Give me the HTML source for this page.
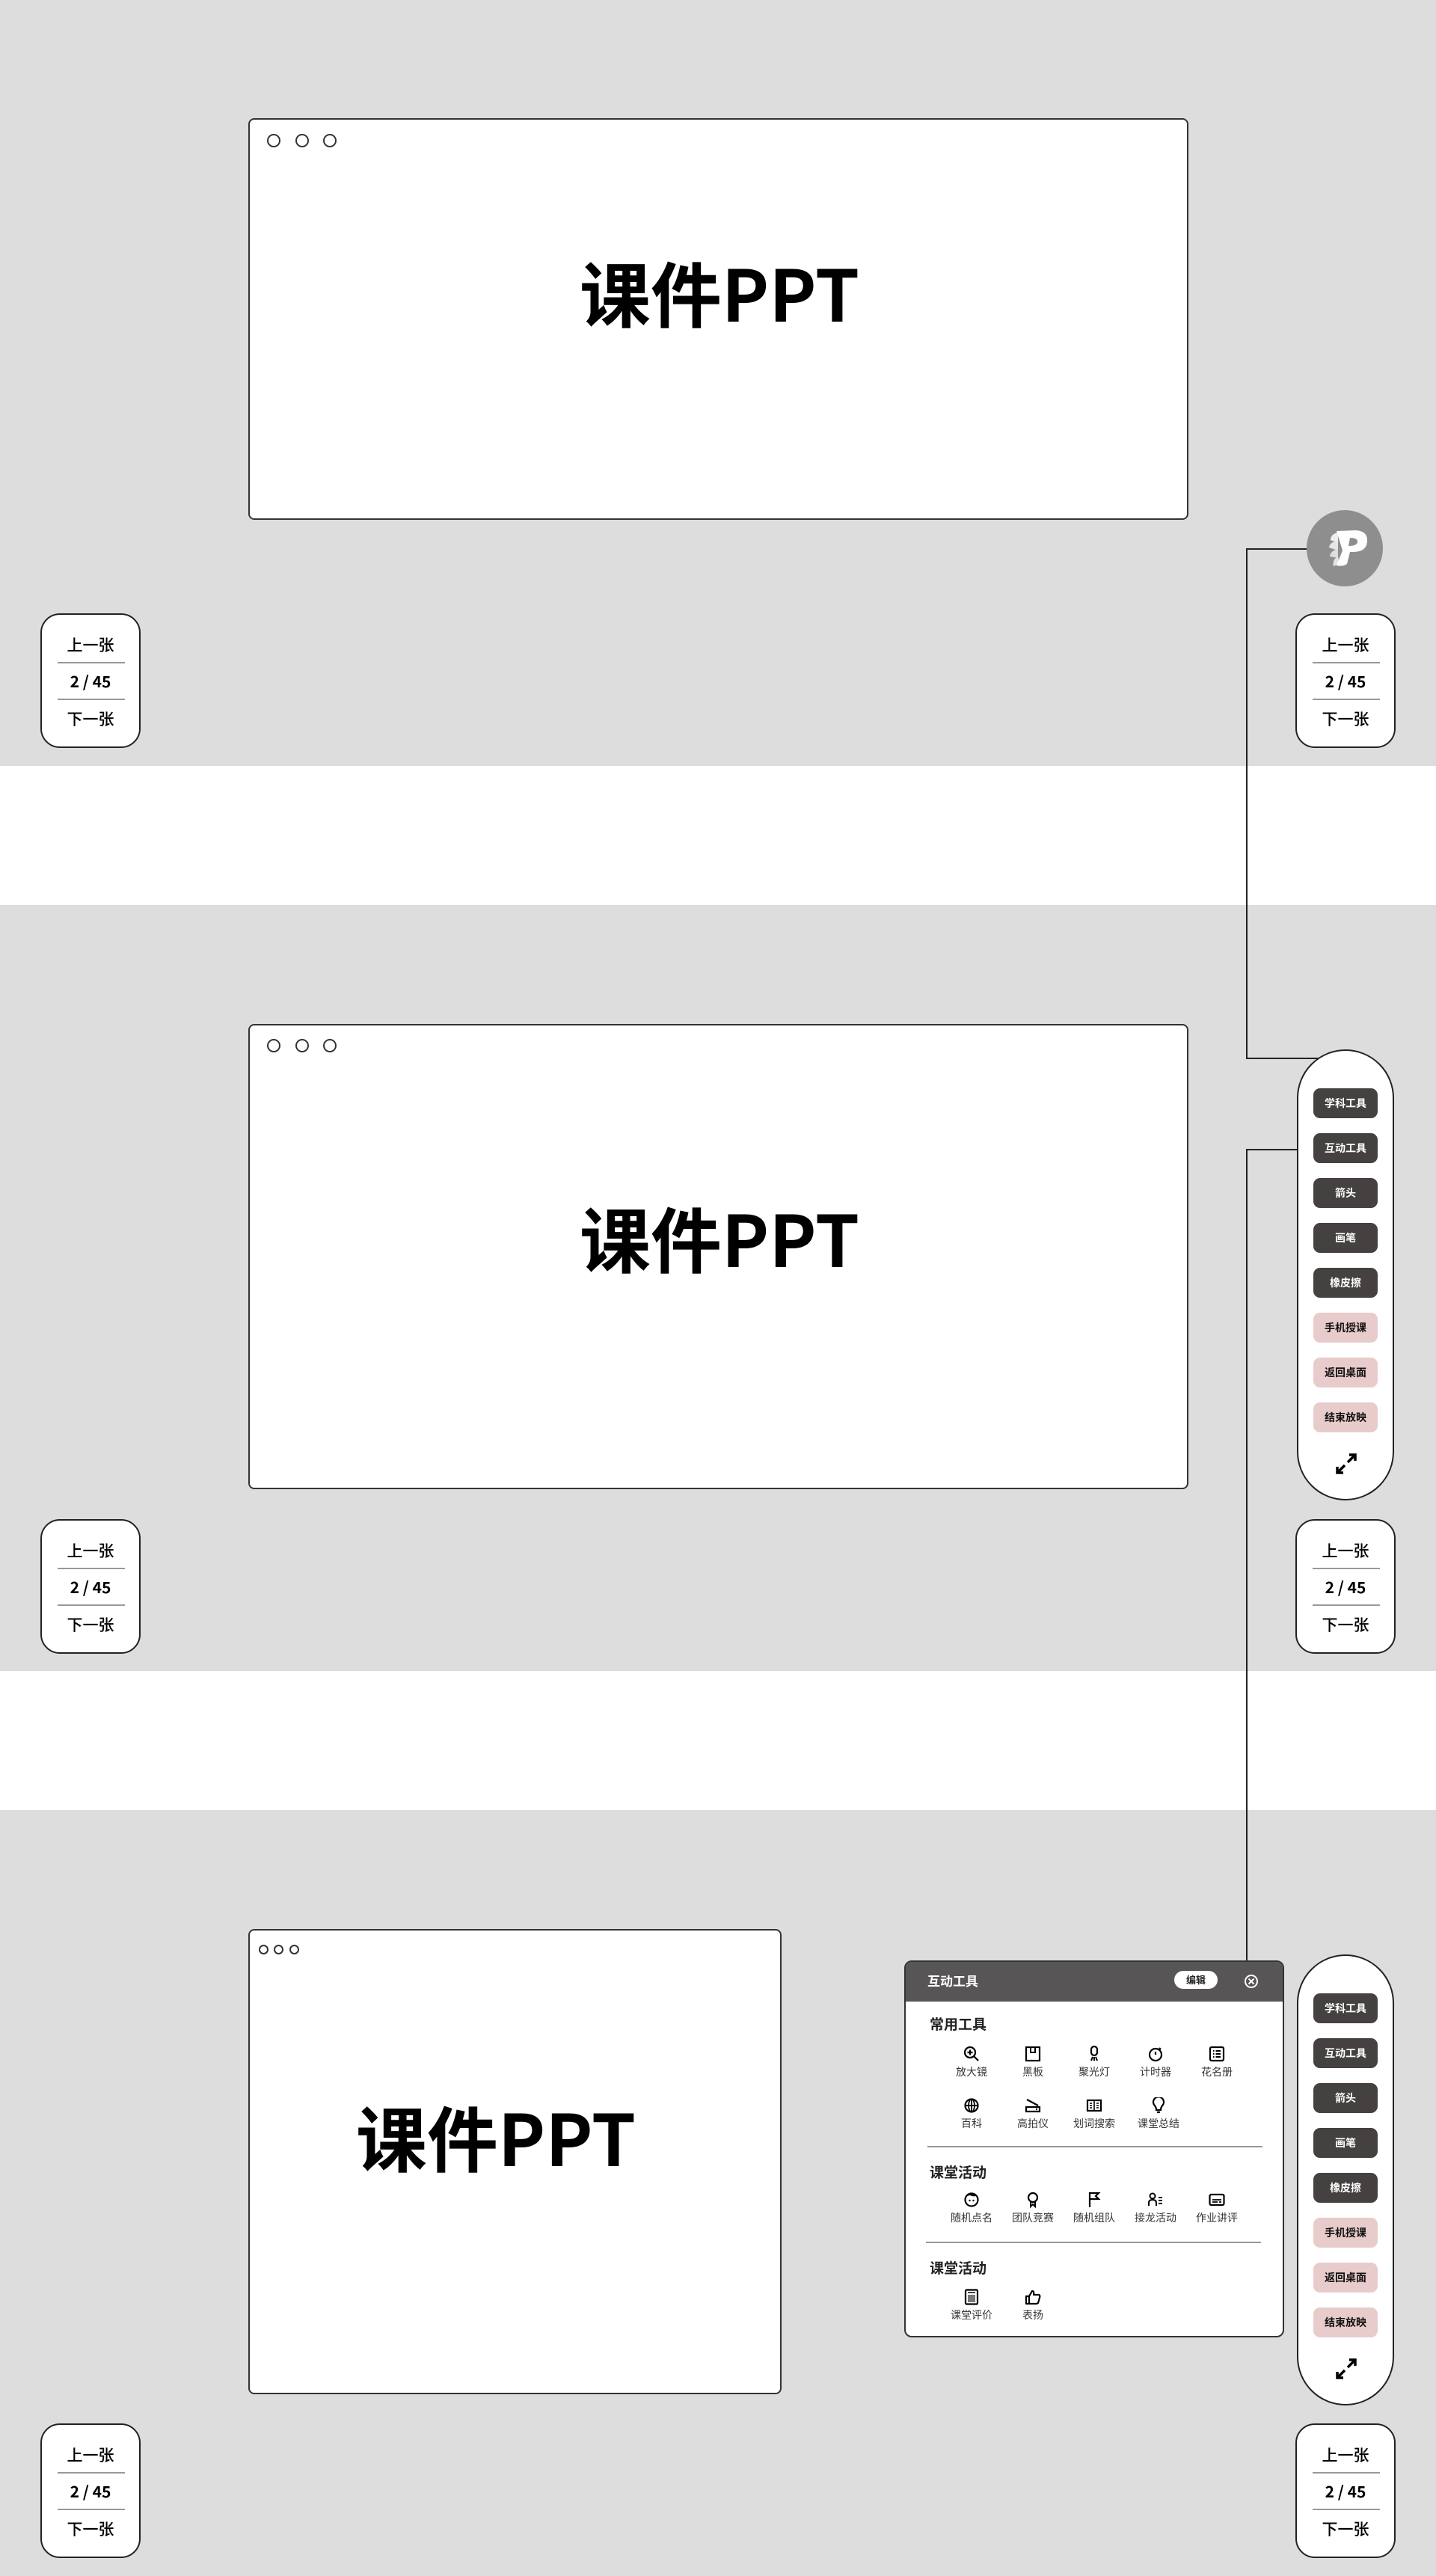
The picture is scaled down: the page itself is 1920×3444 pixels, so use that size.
<!DOCTYPE html>
<html><head><meta charset="utf-8">
<style>
*{margin:0;padding:0;box-sizing:border-box}
body{width:1920px;height:3444px;position:relative;background:#fff;font-family:"Liberation Sans","Noto Sans CJK SC",sans-serif;overflow:hidden}
.sec{position:absolute;left:0;width:1920px;height:1024px;background:#dddddd}
.slide{position:absolute;background:#fff;border:2px solid #333;border-radius:8px}
.dot{position:absolute;border:2px solid #333;border-radius:50%;background:#fff}
.title{position:absolute;font-family:"Noto Sans CJK SC",sans-serif;font-weight:700;font-size:95px;line-height:100px;color:#000;white-space:nowrap;transform:translateX(-50%)}
.nav{position:absolute;width:134px;height:180px;background:#fff;border:2px solid #222;border-radius:26px;font-family:"Noto Sans CJK SC",sans-serif;font-weight:500;color:#000;font-size:21px;text-align:center}
.nav div{position:absolute;left:0;width:130px;line-height:30px}
.nav div.n{font-weight:700;font-family:"Noto Sans CJK SC",sans-serif}
.nav hr{position:absolute;left:21px;width:90px;border:0;border-top:2px solid #999}
.pill{position:absolute;left:1734px;width:130px;height:603px;background:#fff;border:2px solid #222;border-radius:65px}
.btn{position:absolute;left:20px;width:86px;height:40px;border-radius:9px;font-family:"Noto Sans CJK SC",sans-serif;font-weight:700;font-size:14px;line-height:40px;text-align:center}
.d{background:#454141;color:#fff}.p{background:#e8cbcb;color:#111}
.line{position:absolute;background:#222}
.panel{position:absolute;left:1209px;top:2621px;width:508px;height:504px;background:#fff;border:2px solid #333;border-radius:10px;overflow:hidden;font-family:"Noto Sans CJK SC",sans-serif}
.ph{position:absolute;left:0;top:0;width:100%;height:53px;background:#575555}
.h2{position:absolute;left:32px;font-size:19px;font-weight:700;color:#222;line-height:24px}
.it{position:absolute;width:80px;text-align:center;transform:translateX(-50%)}
.it svg{display:block;margin:0 auto}
.it span{display:block;font-size:14px;color:#333;line-height:18px;margin-top:4px}
.div{position:absolute;height:2px;background:#999}
</style></head><body>

<div class="sec" style="top:0"></div>
<div class="sec" style="top:1210px"></div>
<div class="sec" style="top:2420px"></div>

<div class="slide" style="left:332px;top:158px;width:1257px;height:537px"></div>
<div class="dot" style="left:357px;top:179px;width:18px;height:18px"></div>
<div class="dot" style="left:395px;top:179px;width:18px;height:18px"></div>
<div class="dot" style="left:432px;top:179px;width:18px;height:18px"></div>
<div class="title" style="left:962px;top:340px">课件PPT</div>

<div class="slide" style="left:332px;top:1369px;width:1257px;height:622px"></div>
<div class="dot" style="left:357px;top:1389px;width:18px;height:18px"></div>
<div class="dot" style="left:395px;top:1389px;width:18px;height:18px"></div>
<div class="dot" style="left:432px;top:1389px;width:18px;height:18px"></div>
<div class="title" style="left:962px;top:1604px">课件PPT</div>

<div class="slide" style="left:332px;top:2579px;width:713px;height:622px"></div>
<div class="dot" style="left:346px;top:2600px;width:13px;height:13px"></div>
<div class="dot" style="left:366px;top:2600px;width:13px;height:13px"></div>
<div class="dot" style="left:387px;top:2600px;width:13px;height:13px"></div>
<div class="title" style="left:663px;top:2806px">课件PPT</div>

<div class="nav" style="left:54px;top:820px"><div style="top:25px">上一张</div><hr style="top:63px"><div class="n" style="top:74px">2 / 45</div><hr style="top:112px"><div style="top:124px">下一张</div></div>
<div class="nav" style="left:1732px;top:820px"><div style="top:25px">上一张</div><hr style="top:63px"><div class="n" style="top:74px">2 / 45</div><hr style="top:112px"><div style="top:124px">下一张</div></div>
<div class="nav" style="left:54px;top:2031px"><div style="top:25px">上一张</div><hr style="top:63px"><div class="n" style="top:74px">2 / 45</div><hr style="top:112px"><div style="top:124px">下一张</div></div>
<div class="nav" style="left:1732px;top:2031px"><div style="top:25px">上一张</div><hr style="top:63px"><div class="n" style="top:74px">2 / 45</div><hr style="top:112px"><div style="top:124px">下一张</div></div>
<div class="nav" style="left:54px;top:3240px"><div style="top:25px">上一张</div><hr style="top:63px"><div class="n" style="top:74px">2 / 45</div><hr style="top:112px"><div style="top:124px">下一张</div></div>
<div class="nav" style="left:1732px;top:3240px"><div style="top:25px">上一张</div><hr style="top:63px"><div class="n" style="top:74px">2 / 45</div><hr style="top:112px"><div style="top:124px">下一张</div></div>

<div class="line" style="left:1666px;top:733px;width:82px;height:2px"></div>
<div class="line" style="left:1666px;top:733px;width:2px;height:683px"></div>
<div class="line" style="left:1666px;top:1414px;width:100px;height:2px"></div>
<div class="line" style="left:1666px;top:1536px;width:92px;height:2px"></div>
<div class="line" style="left:1666px;top:1536px;width:2px;height:1086px"></div>

<svg style="position:absolute;left:1745px;top:680px" width="106" height="106" viewBox="0 0 106 106">
<circle cx="53" cy="53" r="51" fill="#8e8e8e"/>
<path d="M44 32 Q34 34 34 42 L44 46 Z" fill="#eee"/>
<path d="M44 44 Q33 44 32 52 L44 56 Z" fill="#e6e6e6"/>
<path d="M44 54 Q34 56 33 64 L44 66 Z" fill="#ddd"/>
<path d="M44 64 Q36 68 38 77 L46 74 Z" fill="#e4e4e4"/>
<path d="M42 30 L68 29 Q84 30 83 44 Q82 58 64 58 L60 58 L56 74 Q50 78 42 76 L50 56 Z M60 39 L58 50 Q70 50 70 44 Q70 39 60 39 Z" fill="#fff" fill-rule="evenodd"/>
</svg>

<div class="pill" style="top:1403px">
<div class="btn d" style="top:50px">学科工具</div>
<div class="btn d" style="top:110px">互动工具</div>
<div class="btn d" style="top:170px">箭头</div>
<div class="btn d" style="top:230px">画笔</div>
<div class="btn d" style="top:290px">橡皮擦</div>
<div class="btn p" style="top:350px">手机授课</div>
<div class="btn p" style="top:410px">返回桌面</div>
<div class="btn p" style="top:470px">结束放映</div>
<svg style="position:absolute;left:49px;top:537px" width="30" height="30" viewBox="0 0 30 30"><path d="M17 13 L27 3 M19 3 L27 3 L27 11 M13 17 L3 27 M3 19 L3 27 L11 27" stroke="#000" stroke-width="3.5" fill="none"/></svg>
</div>

<div class="pill" style="top:2613px">
<div class="btn d" style="top:50px">学科工具</div>
<div class="btn d" style="top:110px">互动工具</div>
<div class="btn d" style="top:170px">箭头</div>
<div class="btn d" style="top:230px">画笔</div>
<div class="btn d" style="top:290px">橡皮擦</div>
<div class="btn p" style="top:350px">手机授课</div>
<div class="btn p" style="top:410px">返回桌面</div>
<div class="btn p" style="top:470px">结束放映</div>
<svg style="position:absolute;left:49px;top:537px" width="30" height="30" viewBox="0 0 30 30"><path d="M17 13 L27 3 M19 3 L27 3 L27 11 M13 17 L3 27 M3 19 L3 27 L11 27" stroke="#000" stroke-width="3.5" fill="none"/></svg>
</div>

<div class="panel">
<div class="ph">
<div style="position:absolute;left:29px;top:13px;font-size:17px;font-weight:700;color:#fff;line-height:24px">互动工具</div>
<div style="position:absolute;left:359px;top:12px;width:58px;height:24px;border-radius:12px;background:#fff;font-size:13px;font-weight:700;text-align:center;line-height:24px;color:#222">编辑</div>
<svg style="position:absolute;left:452px;top:16px" width="20" height="20" viewBox="0 0 20 20"><circle cx="10" cy="10" r="8" stroke="#fff" stroke-width="2" fill="none"/><path d="M6.5 6.5 L13.5 13.5 M13.5 6.5 L6.5 13.5" stroke="#fff" stroke-width="2"/></svg>
</div>
<div class="h2" style="top:71px">常用工具</div>
<div class="it" style="left:88px;top:112px"><svg width="22" height="22" viewBox="0 0 22 22"><circle cx="9" cy="9" r="7" stroke="#000" stroke-width="2.2" fill="none"/><path d="M14 14 L20 20 M9 5.5 V12.5 M5.5 9 H12.5" stroke="#000" stroke-width="2.2"/></svg><span>放大镜</span></div>
<div class="it" style="left:170px;top:112px"><svg width="22" height="22" viewBox="0 0 22 22"><rect x="2" y="2" width="18" height="18" stroke="#000" stroke-width="2.2" fill="none"/><path d="M8 2 V9 H14 V2" stroke="#000" stroke-width="2" fill="none"/></svg><span>黑板</span></div>
<div class="it" style="left:252px;top:112px"><svg width="22" height="22" viewBox="0 0 22 22"><rect x="7" y="1" width="8" height="12" rx="4" stroke="#000" stroke-width="2.2" fill="none"/><path d="M7 20 L9 15 M11 15 V20 M15 20 L13 15" stroke="#000" stroke-width="2"/></svg><span>聚光灯</span></div>
<div class="it" style="left:334px;top:112px"><svg width="22" height="22" viewBox="0 0 22 22"><circle cx="11" cy="12" r="8" stroke="#000" stroke-width="2.2" fill="none"/><path d="M11 8 V12 M16 3 L18 5" stroke="#000" stroke-width="2.2"/></svg><span>计时器</span></div>
<div class="it" style="left:416px;top:112px"><svg width="22" height="22" viewBox="0 0 22 22"><rect x="2" y="2" width="18" height="18" rx="2" stroke="#000" stroke-width="2.2" fill="none"/><path d="M6 7 H7.5 M9.5 7 H16 M6 11 H7.5 M9.5 11 H16 M6 15 H7.5 M9.5 15 H16" stroke="#000" stroke-width="2"/></svg><span>花名册</span></div>
<div class="it" style="left:88px;top:181px"><svg width="22" height="22" viewBox="0 0 22 22"><circle cx="11" cy="11" r="8.5" stroke="#000" stroke-width="2.2" fill="none"/><path d="M2.5 11 H19.5 M11 2.5 V19.5" stroke="#000" stroke-width="2"/><ellipse cx="11" cy="11" rx="4" ry="8.5" stroke="#000" stroke-width="1.8" fill="none"/></svg><span>百科</span></div>
<div class="it" style="left:170px;top:181px"><svg width="22" height="22" viewBox="0 0 22 22"><path d="M3 3 L18 11 M2 13 H20 V19 H2 Z M15 16 H17" stroke="#000" stroke-width="2.2" fill="none"/></svg><span>高拍仪</span></div>
<div class="it" style="left:252px;top:181px"><svg width="22" height="22" viewBox="0 0 22 22"><rect x="2" y="4" width="18" height="14" stroke="#000" stroke-width="2.2" fill="none"/><path d="M11 4 V18 M5 8 H8 M5 11 H8 M5 14 H8 M14 8 H17 M14 11 H17 M14 14 H17" stroke="#000" stroke-width="1.6"/></svg><span>划词搜索</span></div>
<div class="it" style="left:338px;top:181px"><svg width="22" height="22" viewBox="0 0 22 22"><path d="M8 17 Q8 13 5 10 A7 7 0 1 1 17 10 Q14 13 14 17 Z M9 20 H13" stroke="#000" stroke-width="2.2" fill="none"/></svg><span>课堂总结</span></div>
<div class="div" style="left:29px;top:246px;width:448px"></div>
<div class="h2" style="top:269px">课堂活动</div>
<div class="it" style="left:88px;top:307px"><svg width="22" height="22" viewBox="0 0 22 22"><circle cx="11" cy="11" r="8.5" stroke="#000" stroke-width="2.2" fill="none"/><path d="M5 6 Q11 1 17 6 Q12 7 9 5 Z" fill="#000"/><circle cx="8.5" cy="12" r="1.2" fill="#000"/><circle cx="13.5" cy="12" r="1.2" fill="#000"/></svg><span>随机点名</span></div>
<div class="it" style="left:170px;top:307px"><svg width="22" height="22" viewBox="0 0 22 22"><circle cx="11" cy="8" r="6" stroke="#000" stroke-width="2.2" fill="none"/><path d="M8 13 V20 L11 17 L14 20 V13" stroke="#000" stroke-width="2" fill="none"/></svg><span>团队竞赛</span></div>
<div class="it" style="left:252px;top:307px"><svg width="22" height="22" viewBox="0 0 22 22"><path d="M5 21 V2 H17 L13 6 L17 10 H5" stroke="#000" stroke-width="2.2" fill="none"/></svg><span>随机组队</span></div>
<div class="it" style="left:334px;top:307px"><svg width="22" height="22" viewBox="0 0 22 22"><circle cx="7" cy="6" r="3.5" stroke="#000" stroke-width="2" fill="none"/><path d="M2 19 V15 Q2 11 7 11 Q12 11 12 15 V19 M15 8 H20 M15 12 H20 M15 16 H20" stroke="#000" stroke-width="2" fill="none"/></svg><span>接龙活动</span></div>
<div class="it" style="left:416px;top:307px"><svg width="22" height="22" viewBox="0 0 22 22"><rect x="1.5" y="4" width="19" height="14" rx="2" stroke="#000" stroke-width="2.2" fill="none"/><path d="M5 11 H17 M5 14 H12 M14 14 H17" stroke="#000" stroke-width="1.8"/></svg><span>作业讲评</span></div>
<div class="div" style="left:27px;top:374px;width:448px"></div>
<div class="h2" style="top:397px">课堂活动</div>
<div class="it" style="left:88px;top:437px"><svg width="22" height="22" viewBox="0 0 22 22"><rect x="3" y="1.5" width="16" height="19" rx="1.5" stroke="#000" stroke-width="2.2" fill="none"/><rect x="6" y="8" width="10" height="10" fill="#777"/><path d="M6 5 H16" stroke="#000" stroke-width="1.5"/></svg><span>课堂评价</span></div>
<div class="it" style="left:170px;top:437px"><svg width="22" height="22" viewBox="0 0 22 22"><path d="M2 10 H6 V20 H2 Z M6 10 L10 3 Q13 3 12 8 H19 Q21 9 20 12 L18 19 Q17 20 15 20 H6" stroke="#000" stroke-width="2.2" fill="none" stroke-linejoin="round"/></svg><span>表扬</span></div>
</div>

</body></html>
